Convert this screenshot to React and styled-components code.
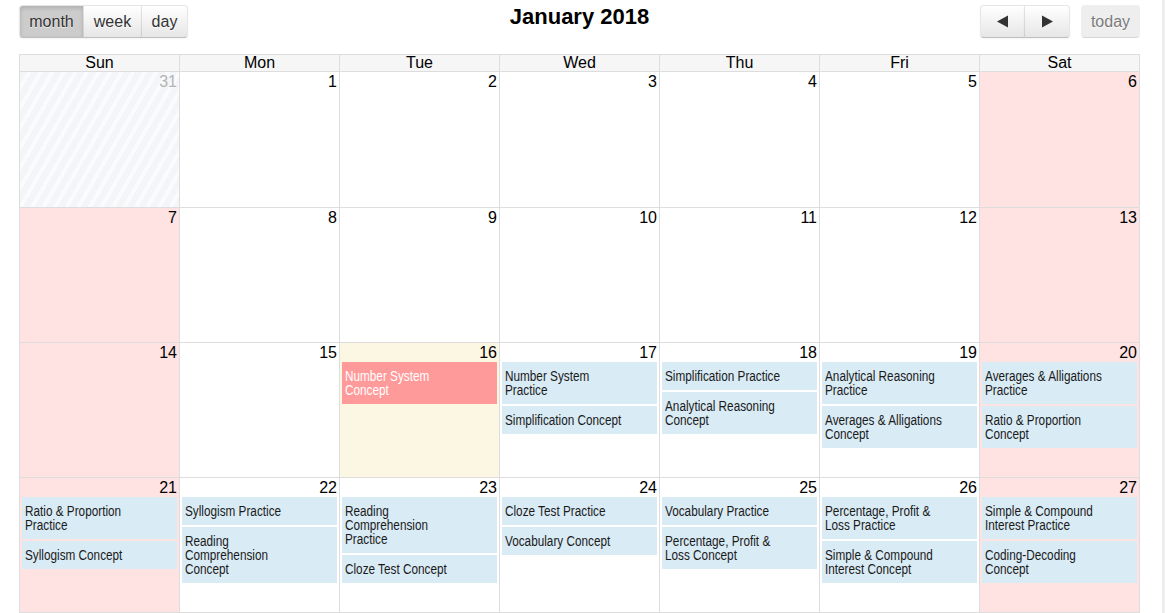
import React from 'react'
import styled, { createGlobalStyle, css } from 'styled-components'

const GlobalStyle = createGlobalStyle`
  html, body {
    margin: 0;
    padding: 0;
    background: #fff;
  }
  body {
    font-family: "Liberation Sans", Arial, sans-serif;
    color: #000;
  }
`

const Page = styled.div`
  display: flex;
  height: 613px;
  overflow: hidden;
`

const Main = styled.div`
  width: 1121px;
  padding: 5px 22px 0 19px;
`

const Rail = styled.div`
  width: 3px;
  background: #eeeeee;
`

const Toolbar = styled.div`
  display: flex;
  align-items: flex-start;
  justify-content: space-between;
  height: 33px;
  margin-bottom: 16px;
`

const Title = styled.h2`
  margin: 0;
  font-size: 22px;
  font-weight: bold;
  line-height: 24px;
`

const Side = styled.div`
  display: flex;
  gap: 11px;
  width: 170px;
  justify-content: ${(p) => (p.right ? 'flex-end' : 'flex-start')};
`

const Group = styled.div`
  display: flex;
`

const Button = styled.button`
  box-sizing: border-box;
  width: ${(p) => p.w}px;
  height: 33px;
  padding: 0;
  display: flex;
  align-items: center;
  justify-content: center;
  font-family: "Liberation Sans", Arial, sans-serif;
  font-size: 16px;
  color: #333;
  background-color: #f5f5f5;
  background-image: linear-gradient(to bottom, #fff, #e6e6e6);
  border: 1px solid;
  border-color: #e6e6e6 #e6e6e6 #bfbfbf;
  border-left: ${(p) => (p.first ? '1px solid #e6e6e6' : '1px solid rgba(0,0,0,0.1)')};
  border-radius: ${(p) =>
    p.first && p.last ? '4px' : p.first ? '4px 0 0 4px' : p.last ? '0 4px 4px 0' : '0'};
  margin-left: ${(p) => (p.first ? 0 : -1)}px;
  text-shadow: 0 1px 1px rgba(255, 255, 255, 0.75);
  box-shadow: inset 0 1px 0 rgba(255, 255, 255, 0.2), 0 1px 2px rgba(0, 0, 0, 0.05);
  cursor: pointer;
  ${(p) =>
    p.active &&
    css`
      background-color: #ccc;
      background-image: none;
      box-shadow: inset 0 2px 4px rgba(0, 0, 0, 0.15), 0 1px 2px rgba(0, 0, 0, 0.05);
    `}
  ${(p) =>
    p.disabled &&
    css`
      opacity: 0.65;
      background-color: #e6e6e6;
      background-image: none;
      box-shadow: none;
      cursor: default;
    `}
`

const Arrow = ({ dir }) => (
  <svg width="13" height="13" viewBox="0 0 13 13">
    <path d={dir === 'left' ? 'M12 0.5 L1 6.5 L12 12.5 Z' : 'M1 0.5 L12 6.5 L1 12.5 Z'} fill="#333" />
  </svg>
)

const Grid = styled.div`
  display: grid;
  grid-template-columns: repeat(7, 160px);
  border-left: 1px solid #ddd;
  border-top: 1px solid #ddd;
`

const HeadCell = styled.div`
  height: 16px;
  line-height: 16px;
  font-size: 16px;
  text-align: center;
  background: #f6f6f6;
  border-right: 1px solid #ddd;
  border-bottom: 1px solid #ddd;
`

const dayBg = {
  other: css`
    background: repeating-linear-gradient(120deg, #f3f5f8 0 6px, #fafbfc 6px 10px);
  `,
  weekend: css`
    background: #ffe3e3;
  `,
  today: css`
    background: #fcf7e3;
  `,
  normal: css`
    background: #fff;
  `,
}

const DayCell = styled.div`
  height: ${(p) => p.h}px;
  border-right: 1px solid #ddd;
  border-bottom: 1px solid #ddd;
  ${(p) => dayBg[p.kind]}
`

const DayNum = styled.div`
  height: 19px;
  padding-right: 2px;
  text-align: right;
  font-size: 16px;
  line-height: 19px;
  color: ${(p) => (p.muted ? '#b4b4b4' : '#000')};
`

const EventList = styled.div`
  display: flex;
  flex-direction: column;
  gap: 2px;
  padding: 0 2px;
`

const Event = styled.div`
  overflow: hidden;
  padding: 7px 3px;
  font-size: 14px;
  line-height: 14px;
  background: ${(p) => (p.hot ? '#ff9a9a' : '#d9ebf5')};
  color: ${(p) => (p.hot ? '#fff' : '#1a1a1a')};
`

// no narrow face installed, so squeeze Liberation Sans to the condensed look
const EventTitle = styled.span`
  display: inline-block;
  white-space: pre;
  transform: scaleX(0.84);
  transform-origin: left top;
`

const days = ['Sun', 'Mon', 'Tue', 'Wed', 'Thu', 'Fri', 'Sat']

const events = {
  16: [{ title: 'Number System\nConcept', hot: true }],
  17: [{ title: 'Number System\nPractice' }, { title: 'Simplification Concept' }],
  18: [{ title: 'Simplification Practice' }, { title: 'Analytical Reasoning\nConcept' }],
  19: [{ title: 'Analytical Reasoning\nPractice' }, { title: 'Averages & Alligations\nConcept' }],
  20: [{ title: 'Averages & Alligations\nPractice' }, { title: 'Ratio & Proportion\nConcept' }],
  21: [{ title: 'Ratio & Proportion\nPractice' }, { title: 'Syllogism Concept' }],
  22: [{ title: 'Syllogism Practice' }, { title: 'Reading\nComprehension\nConcept' }],
  23: [{ title: 'Reading\nComprehension\nPractice' }, { title: 'Cloze Test Concept' }],
  24: [{ title: 'Cloze Test Practice' }, { title: 'Vocabulary Concept' }],
  25: [{ title: 'Vocabulary Practice' }, { title: 'Percentage, Profit &\nLoss Concept' }],
  26: [{ title: 'Percentage, Profit &\nLoss Practice' }, { title: 'Simple & Compound\nInterest Concept' }],
  27: [{ title: 'Simple & Compound\nInterest Practice' }, { title: 'Coding-Decoding\nConcept' }],
}

const weeks = [
  [31, 1, 2, 3, 4, 5, 6],
  [7, 8, 9, 10, 11, 12, 13],
  [14, 15, 16, 17, 18, 19, 20],
  [21, 22, 23, 24, 25, 26, 27],
]

const rowHeights = [135, 134, 134, 134]

export default function App() {
  return (
    <>
      <GlobalStyle />
      <Page>
        <Main>
          <Toolbar>
            <Side>
              <Group>
                <Button first active w={65}>month</Button>
                <Button w={59}>week</Button>
                <Button last w={47}>day</Button>
              </Group>
            </Side>
            <Title>January 2018</Title>
            <Side right>
              <Group>
                <Button first w={45}><Arrow dir="left" /></Button>
                <Button last w={46}><Arrow dir="right" /></Button>
              </Group>
              <Button first last disabled w={59}>today</Button>
            </Side>
          </Toolbar>

          <Grid>
            {days.map((d) => (
              <HeadCell key={d}>{d}</HeadCell>
            ))}
            {weeks.map((week, wi) =>
              week.map((n, di) => {
                const other = wi === 0 && di === 0
                let kind = 'normal'
                if (other) kind = 'other'
                else if (n === 16) kind = 'today'
                else if (di === 0 || di === 6) kind = 'weekend'
                const list = other ? [] : events[n] || []
                return (
                  <DayCell key={`${wi}-${di}`} kind={kind} h={rowHeights[wi]}>
                    <DayNum muted={other}>{n}</DayNum>
                    <EventList>
                      {list.map((e) => (
                        <Event key={e.title} hot={e.hot}>
                          <EventTitle>{e.title}</EventTitle>
                        </Event>
                      ))}
                    </EventList>
                  </DayCell>
                )
              })
            )}
          </Grid>
        </Main>
        <Rail />
      </Page>
    </>
  )
}
